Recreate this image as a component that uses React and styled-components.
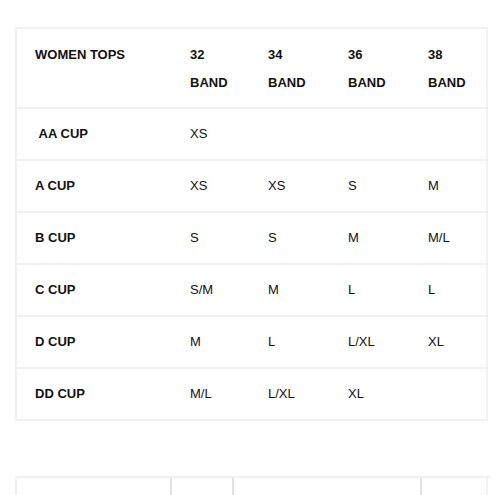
import React from 'react';
import styled, { createGlobalStyle } from 'styled-components';

const GlobalStyle = createGlobalStyle`
  html, body {
    margin: 0;
    padding: 0;
    background: #ffffff;
    overflow: hidden;
  }
  body {
    font-family: "Liberation Sans", Arial, sans-serif;
    color: #111;
  }
`;

// Page wrapper
const Page = styled.div`
  width: 495px;
  height: 495px;
  padding: 27px 7px 0 15px;
  box-sizing: border-box;
  display: flex;
  flex-direction: column;
  gap: 55px;
`;

// Size chart table
const SizeTable = styled.table`
  width: 473px;
  border-collapse: collapse;
  table-layout: fixed;
  border: 2px solid #f1f1f1;
  font-size: 13px;
  line-height: 28px;
`;

const Row = styled.tr`
  border-bottom: 2px solid #f0f0f0;
`;

const Cell = styled.td`
  padding: 11px 5px 11px ${(p) => (p.$first ? '18px' : '20px')};
  font-weight: ${(p) => (p.$bold ? 700 : 400)};
  vertical-align: middle;
  text-align: left;
  white-space: ${(p) => (p.$first ? 'nowrap' : 'normal')};
`;

const HeadCell = styled(Cell).attrs({ as: 'th' })`
  font-weight: 700;
  vertical-align: top;
  padding-top: 12px;
  padding-bottom: 10px;
`;

// Second (cut off) table
const NextTable = styled.div`
  width: 473px;
  height: 30px;
  display: grid;
  grid-template-columns: 155px 62px 188px 66px;
  border-top: 2px solid #f0f0f0;
  border-left: 2px solid #f1f1f1;
`;

const NextCell = styled.div`
  border-right: 2px solid ${(p) => (p.$last ? '#f1f1f1' : '#e2e2e2')};
`;

const bands = ['32 BAND', '34 BAND', '36 BAND', '38 BAND'];

const sizes = [
  { cup: '\u00a0AA CUP', values: ['XS', '', '', ''] },
  { cup: 'A CUP', values: ['XS', 'XS', 'S', 'M'] },
  { cup: 'B CUP', values: ['S', 'S', 'M', 'M/L'] },
  { cup: 'C CUP', values: ['S/M', 'M', 'L', 'L'] },
  { cup: 'D CUP', values: ['M', 'L', 'L/XL', 'XL'] },
  { cup: 'DD CUP', values: ['M/L', 'L/XL', 'XL', ''] },
];

const App = () => {
  return (
    <>
      <GlobalStyle />
      <Page>
        <SizeTable>
          <colgroup>
            <col style={{ width: '154px' }} />
            <col style={{ width: '78px' }} />
            <col style={{ width: '80px' }} />
            <col style={{ width: '80px' }} />
            <col />
          </colgroup>
          <thead>
            <Row>
              <HeadCell $first>WOMEN TOPS</HeadCell>
              {bands.map((b) => (
                <HeadCell key={b}>{b}</HeadCell>
              ))}
            </Row>
          </thead>
          <tbody>
            {sizes.map((row) => (
              <Row key={row.cup}>
                <Cell $first $bold>{row.cup}</Cell>
                {row.values.map((v, i) => (
                  <Cell key={i}>{v}</Cell>
                ))}
              </Row>
            ))}
          </tbody>
        </SizeTable>

        <NextTable>
          <NextCell />
          <NextCell />
          <NextCell />
          <NextCell $last />
        </NextTable>
      </Page>
    </>
  );
};

export default App;
